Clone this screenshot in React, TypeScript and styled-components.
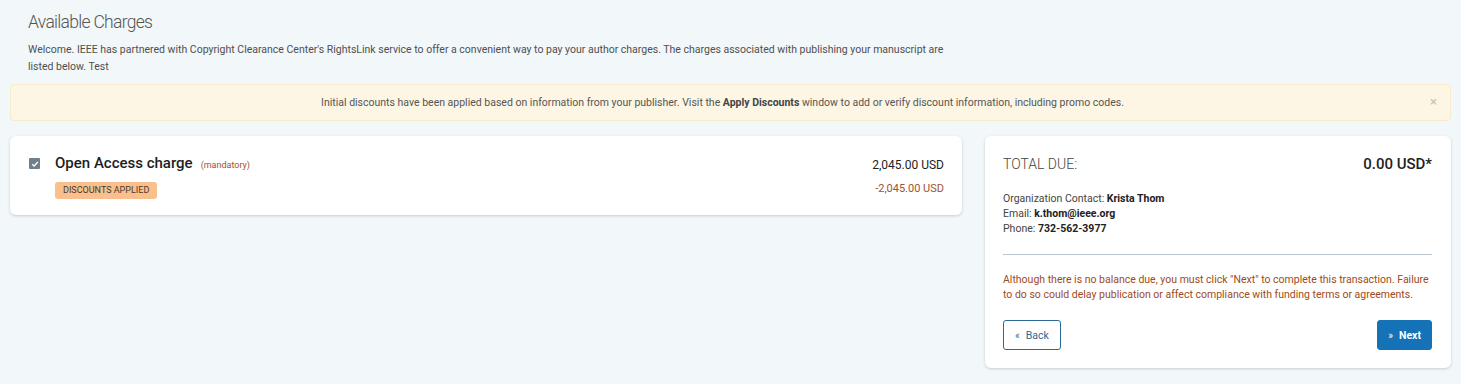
import styled, { createGlobalStyle } from "styled-components";

const GlobalStyle = createGlobalStyle`
  body {
    margin: 0;
    background: #f2f7fa;
    font-family: Roboto, "Liberation Sans", Arial, sans-serif;
    color: #4a4a4a;
  }
`;

const Page = styled.div`
  padding: 8px 10px 14px;
`;

const Intro = styled.div`
  padding: 0 18px;
`;

const Title = styled.h1`
  margin: 2px 0 7px;
  font-size: 17.5px;
  letter-spacing: -0.7px;
  font-weight: 300;
  color: #555;
  line-height: 24px;
`;

const Lead = styled.p`
  margin: 0;
  max-width: 930px;
  font-size: 10.5px;
  line-height: 17px;
  color: #4f4f4f;
`;

const Alert = styled.div`
  position: relative;
  margin-top: 9px;
  height: 35px;
  padding-right: 16px;
  display: flex;
  align-items: center;
  justify-content: center;
  background: #fdf6e4;
  border: 1px solid #f7ebc8;
  border-radius: 4px;
  font-size: 10.5px;
  color: #555;

  b {
    font-weight: 700;
    color: #444;
  }
`;

const Close = styled.span`
  position: absolute;
  right: 13px;
  top: 9px;
  font-size: 13px;
  color: #c4c0b4;
`;

const Columns = styled.div`
  margin-top: 15px;
  display: grid;
  grid-template-columns: 952px 1fr;
  gap: 23px;
  align-items: start;
`;

const Card = styled.div`
  background: #fff;
  border-radius: 6px;
  box-shadow: 0 1px 3px rgba(40, 60, 80, 0.22);
`;

const ChargeCard = styled(Card)`
  height: 79px;
  box-sizing: border-box;
  padding: 19px 18px 0 19px;
  display: flex;
  gap: 15px;
`;

const Check = styled.span`
  margin-top: 3px;
  width: 11px;
  height: 11px;
  border-radius: 1px;
  background: #6f7f8c;
  display: flex;
  align-items: center;
  justify-content: center;
  flex-shrink: 0;
`;

const ChargeMain = styled.div`
  flex: 1;
`;

const ChargeName = styled.div`
  display: flex;
  align-items: baseline;
  gap: 8px;
  font-size: 15px;
  font-weight: 500;
  color: #1e1e1e;
  line-height: 17px;
`;

const Note = styled.span`
  font-size: 9px;
  font-weight: 400;
  color: #a0522d;
`;

const Badge = styled.span`
  display: inline-block;
  margin-top: 8px;
  padding: 0 8px;
  height: 17px;
  line-height: 17px;
  font-size: 9px;
  color: #4a3a2a;
  background: #f9c08e;
  border-radius: 3px;
`;

const Amounts = styled.div`
  text-align: right;
  padding-top: 3px;
`;

const Amount = styled.div<{ $discount?: boolean }>`
  font-size: ${(p) => (p.$discount ? "11px" : "12px")};
  color: ${(p) => (p.$discount ? "#a0522d" : "#222")};
  margin-top: ${(p) => (p.$discount ? "10px" : "0")};
  line-height: 14px;
`;

const SummaryCard = styled(Card)`
  padding: 18px 19px 18px 18px;
`;

const TotalRow = styled.div`
  display: flex;
  justify-content: space-between;
  align-items: baseline;
  margin-top: 1px;
`;

const TotalLabel = styled.span`
  font-size: 14px;
  font-weight: 300;
  color: #444;
`;

const TotalValue = styled.span`
  font-size: 15px;
  font-weight: 500;
  color: #222;
`;

const Contact = styled.div`
  margin-top: 18px;
  font-size: 10.5px;
  line-height: 15px;
  color: #444;

  b {
    font-weight: 700;
    color: #222;
  }
`;

const Rule = styled.hr`
  margin: 18px 0 17px;
  border: 0;
  border-top: 1px solid #b9c7d0;
`;

const Warning = styled.p`
  margin: 0;
  font-size: 10.5px;
  line-height: 15px;
  color: #a04a20;
`;

const Actions = styled.div`
  margin-top: 18px;
  display: flex;
  justify-content: space-between;
`;

const Button = styled.button<{ $primary?: boolean }>`
  height: 30px;
  padding: 0 ${(p) => (p.$primary ? "10px" : "11px")};
  border-radius: 3px;
  font-family: inherit;
  font-size: 10.5px;
  display: flex;
  align-items: center;
  gap: 6px;
  cursor: pointer;
  border: 1px solid ${(p) => (p.$primary ? "#1572b6" : "#2b6a96")};
  background: ${(p) => (p.$primary ? "#1572b6" : "#fff")};
  color: ${(p) => (p.$primary ? "#fff" : "#2b6a96")};
  font-weight: ${(p) => (p.$primary ? 700 : 400)};
`;

const Chevrons = styled.span`
  font-size: 10px;
  font-weight: 400;
`;

export default function App() {
  return (
    <Page>
      <GlobalStyle />
      <Intro>
        <Title>Available Charges</Title>
        <Lead>
          Welcome. IEEE has partnered with Copyright Clearance Center's RightsLink service to offer a
          convenient way to pay your author charges. The charges associated with publishing your
          manuscript are listed below. Test
        </Lead>
      </Intro>
      <Alert>
        <span>
          Initial discounts have been applied based on information from your publisher. Visit the{" "}
          <b>Apply Discounts</b> window to add or verify discount information, including promo codes.
        </span>
        <Close>×</Close>
      </Alert>
      <Columns>
        <ChargeCard>
          <Check>
            <svg width="8" height="8" viewBox="0 0 8 8">
              <path d="M1.2 4.2 L3.2 6 L6.8 2" stroke="#fff" strokeWidth="1.4" fill="none" />
            </svg>
          </Check>
          <ChargeMain>
            <ChargeName>
              Open Access charge <Note>(mandatory)</Note>
            </ChargeName>
            <Badge>DISCOUNTS APPLIED</Badge>
          </ChargeMain>
          <Amounts>
            <Amount>2,045.00 USD</Amount>
            <Amount $discount>-2,045.00 USD</Amount>
          </Amounts>
        </ChargeCard>
        <SummaryCard>
          <TotalRow>
            <TotalLabel>TOTAL DUE:</TotalLabel>
            <TotalValue>0.00 USD*</TotalValue>
          </TotalRow>
          <Contact>
            <div>
              Organization Contact: <b>Krista Thom</b>
            </div>
            <div>
              Email: <b>k.thom@ieee.org</b>
            </div>
            <div>
              Phone: <b>732-562-3977</b>
            </div>
          </Contact>
          <Rule />
          <Warning>
            Although there is no balance due, you must click "Next" to complete this transaction.
            Failure to do so could delay publication or affect compliance with funding terms or
            agreements.
          </Warning>
          <Actions>
            <Button>
              <Chevrons>«</Chevrons> Back
            </Button>
            <Button $primary>
              <Chevrons>»</Chevrons> Next
            </Button>
          </Actions>
        </SummaryCard>
      </Columns>
    </Page>
  );
}
